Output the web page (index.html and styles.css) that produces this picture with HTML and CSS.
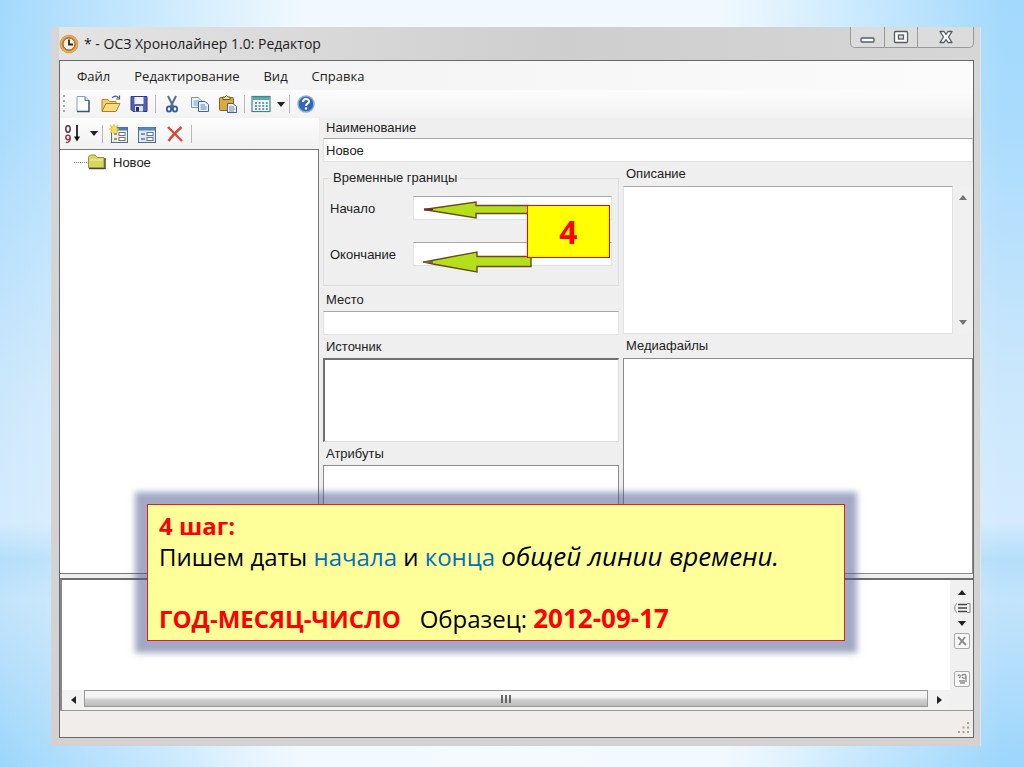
FILE: index.html
```
<!DOCTYPE html>
<html lang="ru">
<head>
<meta charset="utf-8">
<title>ОСЗ Хронолайнер 1.0: Редактор</title>
<link rel="stylesheet" href="styles.css">
</head>
<body>
<main class="slide">
  <section class="window">
    <header class="titlebar">
      <svg class="app-icon" viewBox="0 0 20 20" width="20" height="20"><circle cx="10" cy="10" r="9.3" fill="#c98a3c"/><circle cx="10" cy="10" r="8" fill="none" stroke="#e6b06a" stroke-width="1.5"/><circle cx="10" cy="10" r="6" fill="#fff3df" stroke="#a35f1c"/><path d="M10 5.5V10.5H14" fill="none" stroke="#3a2412" stroke-width="1.8"/></svg>
      <h1 class="title">* - ОСЗ Хронолайнер 1.0: Редактор</h1>
      <div class="caption-buttons">
        <button class="cap cap-small" aria-label="Свернуть"><svg viewBox="0 0 18 16" width="18" height="16"><rect x="2" y="9" width="13" height="4" rx="1" fill="#fff" stroke="#555b66" stroke-width="1.3"/></svg></button>
        <button class="cap cap-small" aria-label="Развернуть"><svg viewBox="0 0 18 16" width="18" height="16"><rect x="2.5" y="2.500" width="13" height="11" rx="1" fill="#fff" stroke="#555b66" stroke-width="1.3"/><rect x="6.500" y="6" width="5" height="4" fill="#ddd" stroke="#555b66" stroke-width="1.3"/></svg></button>
        <button class="cap cap-close" aria-label="Закрыть"><svg viewBox="0 0 18 16" width="18" height="16"><path d="M3 2.500H7L9 5.500L11 2.500H15L11.500 8L15 13.500H11L9 10.500L7 13.500H3L6.500 8Z" fill="#fff" stroke="#555b66" stroke-width="1.300" stroke-linejoin="round"/></svg></button>
      </div>
    </header>
    <div class="client">
      <nav class="menubar">
        <button>Файл</button><button>Редактирование</button><button>Вид</button><button>Справка</button>
      </nav>
      <div class="toolbar">
        <span class="grip"></span>
        <button class="tool" aria-label="Создать"><svg viewBox="0 0 20 20" width="20" height="20"><path d="M4 2.500H12L16 6.500V17.500H4Z" fill="#fafdff" stroke="#8ba0bd"/><path d="M16 6.500V17.500H4" fill="none" stroke="#3c5575" stroke-width="1.400"/><path d="M12 2.500V6.500H16" fill="#cddcee" stroke="#54708f"/></svg></button>
        <button class="tool" aria-label="Открыть"><svg viewBox="0 0 20 20" width="20" height="20"><path d="M1 17V5.500H7L8.500 7.500H15V10" fill="#f4cf6a" stroke="#b8862b"/><path d="M1 17.500L5 9.500H19L15 17.500Z" fill="#fbdc7c" stroke="#b07c20"/><path d="M11 4C13 1.500 16 1.500 17.500 4M18.500 1.500V5H15" fill="none" stroke="#4c5c77" stroke-width="1.200"/></svg></button>
        <button class="tool" aria-label="Сохранить"><svg viewBox="0 0 20 20" width="20" height="20"><path d="M2 2.500H18V17.500H4L2 15.500Z" fill="#5360b6" stroke="#303a86"/><rect x="5.500" y="3" width="9" height="7" fill="#f1f5ff"/><rect x="6" y="12" width="8" height="5.500" fill="#dfe3ee"/><rect x="7" y="13" width="3" height="4.500" fill="#27305c"/></svg></button>
        <span class="sep"></span>
        <button class="tool" aria-label="Вырезать"><svg viewBox="0 0 20 20" width="20" height="20"><path d="M6 2L11.500 13M14 2L8.500 13" stroke="#54708f" stroke-width="2"/><ellipse cx="7" cy="15" rx="2.200" ry="2.700" fill="none" stroke="#315b9d" stroke-width="1.800"/><ellipse cx="13" cy="15" rx="2.200" ry="2.700" fill="none" stroke="#315b9d" stroke-width="1.800"/></svg></button>
        <button class="tool" aria-label="Копировать"><svg viewBox="0 0 20 20" width="20" height="20"><path d="M1.500 3.500H8L11.500 6.500V13.500H1.500Z" fill="#edf4ff" stroke="#7892b7"/><path d="M3.500 7H9M3.500 9H8M3.500 11H8" stroke="#6e98cf"/><path d="M8.500 7.500H15L18.500 10.500V17.500H8.500Z" fill="#edf4ff" stroke="#44679b"/><path d="M10.500 11H15M10.500 13H16.500M10.500 15H16.500" stroke="#4f80c2"/></svg></button>
        <button class="tool" aria-label="Вставить"><svg viewBox="0 0 20 20" width="20" height="20"><rect x="1.500" y="3.500" width="14" height="13" rx="1" fill="#dcaa3c" stroke="#8c6419"/><path d="M5 5.500V3H7L8.500 1.500L10 3H12V5.500Z" fill="#f4e7b8" stroke="#725621"/><path d="M9.500 9.500H15L18.500 12.500V18.500H9.500Z" fill="#f2f7ff" stroke="#405f91"/><path d="M11 13H16M11 15H17M11 17H16" stroke="#6287bb"/></svg></button>
        <span class="sep"></span>
        <button class="tool" aria-label="Таблица"><svg viewBox="0 0 20 20" width="20" height="20"><rect x="1" y="2.500" width="18" height="15" fill="#f5ffff" stroke="#438192" stroke-width="1.200"/><rect x="1.500" y="3" width="17" height="3" fill="#58aaa6"/><path d="M4 9H17M4 12H17M4 15H17" stroke="#387895" stroke-width="1.700" stroke-dasharray="2 1.600"/></svg></button>
        <button class="drop" aria-label="Выбор таблицы"><span class="tri down"></span></button>
        <span class="sep"></span>
        <button class="tool" aria-label="Справка"><svg viewBox="0 0 20 20" width="20" height="20"><circle cx="10" cy="10" r="8" fill="#3467b4" stroke="#8faed7" stroke-width="1.500"/><path d="M7 8C7 4 13 4 13 7.500C13 9.500 10 9.500 10 12" fill="none" stroke="#fff" stroke-width="2"/><circle cx="10" cy="14.500" r="1.200" fill="#fff"/></svg></button>
      </div>
      <div class="workspace">
        <aside class="side">
          <div class="side-toolbar">
            <button class="tool" aria-label="Сортировка"><svg viewBox="0 0 20 20" width="20" height="20"><ellipse cx="4" cy="5" rx="2.200" ry="3.200" fill="none" stroke="#5a3346" stroke-width="1.500"/><circle cx="4" cy="13.500" r="2.200" fill="none" stroke="#8b3c4d" stroke-width="1.500"/><path d="M6.200 13.500C6.200 18.500 3 19 2 18" fill="none" stroke="#8b3c4d" stroke-width="1.500"/><path d="M13 1V15" stroke="#111" stroke-width="1.700"/><path d="M10 12.500H16L13 17.500Z" fill="#111"/></svg></button>
            <button class="drop" aria-label="Порядок сортировки"><span class="tri down"></span></button>
            <span class="sep"></span>
            <button class="tool" aria-label="Добавить"><svg viewBox="0 0 20 20" width="20" height="20"><rect x="2.500" y="3.500" width="16" height="15" fill="#f1f0d9" stroke="#536d90"/><path d="M3 5H18" stroke="#4c78b4" stroke-width="3"/><rect x="10" y="8.500" width="6" height="3" fill="#fff" stroke="#68758b"/><rect x="10" y="13.500" width="6" height="3" fill="#fff" stroke="#68758b"/><path d="M5 10H8M5 15H8" stroke="#777" stroke-width="1.500"/><path d="M1 1L4 3L5 0L6 3L9 1L7.500 4L10 5L7.500 6L9 9L6 7.500L5 10L4 7.500L1 9L2.500 6L0 5L2.500 4Z" fill="#f6df58" stroke="#d9b831" stroke-width=".5"/></svg></button>
            <button class="tool" aria-label="Изменить"><svg viewBox="0 0 20 20" width="20" height="20"><rect x="1.500" y="3.500" width="17" height="15" fill="#dce9f5" stroke="#536d90"/><path d="M2 5H18" stroke="#5c86bb" stroke-width="3"/><rect x="10" y="8.500" width="6" height="3" fill="#fff" stroke="#68758b"/><rect x="10" y="13.500" width="6" height="3" fill="#fff" stroke="#68758b"/><path d="M4 10H8M4 15H8" stroke="#68758b" stroke-width="1.500"/></svg></button>
            <button class="tool" aria-label="Удалить"><svg viewBox="0 0 20 20" width="20" height="20"><path d="M3 3C8 8 12 12 17 17M16.500 3C11 8 7 12 3.500 17" fill="none" stroke="#d34b38" stroke-width="2.400"/></svg></button>
            <span class="sep"></span>
          </div>
          <ul class="tree">
            <li><span class="branch"></span><svg viewBox="0 0 20 18" width="20" height="18"><path d="M1.500 15V4L3.500 2H8L10 4.500H17V15Z" fill="#d6d565" stroke="#9a9839"/><path d="M2 15.500H18V5" fill="none" stroke="#4c4b25" stroke-width="1.500"/><path d="M3 7H16" stroke="#f3f2a4"/></svg><span>Новое</span></li>
          </ul>
        </aside>
        <form class="form">
          <label class="caption" for="name">Наименование</label>
          <input class="field" id="name" type="text" value="Новое">
          <div class="columns">
            <div class="col-left">
              <fieldset class="bounds">
                <legend>Временные границы</legend>
                <label for="start">Начало</label><input class="field" id="start" type="text">
                <label for="end">Окончание</label><input class="field" id="end" type="text">
              </fieldset>
              <label class="caption" for="place">Место</label>
              <input class="field" id="place" type="text">
              <label class="caption" for="source">Источник</label>
              <textarea class="area sunken" id="source"></textarea>
              <label class="caption" for="attrs">Атрибуты</label>
              <textarea class="area grow" id="attrs"></textarea>
            </div>
            <div class="col-right">
              <label class="caption" for="descr">Описание</label>
              <div class="descr">
                <textarea class="area" id="descr"></textarea>
                <div class="vscroll"><span class="tri up"></span><span class="tri down"></span></div>
              </div>
              <label class="caption" for="media">Медиафайлы</label>
              <textarea class="area grow" id="media"></textarea>
            </div>
          </div>
        </form>
      </div>
      <section class="timeline">
        <div class="timeline-main">
          <div class="canvas"></div>
          <div class="hscroll"><button class="arrow" aria-label="Влево"><span class="tri left"></span></button><div class="thumb"><i></i><i></i><i></i></div><button class="arrow" aria-label="Вправо"><span class="tri right"></span></button></div>
        </div>
        <div class="timeline-side">
          <button aria-label="Вверх"><span class="tri up"></span></button>
          <svg viewBox="0 0 18 12" width="18" height="12"><path d="M4 1.500C1 3 1 9 4 10.500M14 1.500H17V10.500H14" fill="none" stroke="#888"/><path d="M5 2.500H14M5 6H14M5 9.500H14" stroke="#444" stroke-width="1.500"/></svg>
          <button aria-label="Вниз"><span class="tri down"></span></button>
          <button class="mini" aria-label="Убрать"><svg viewBox="0 0 14 14" width="14" height="14"><path d="M3 3L11 11M10 3L4 11" stroke="#8d8d8d" stroke-width="2"/></svg></button>
          <button class="mini last" aria-label="Масштаб"><svg viewBox="0 0 14 14" width="14" height="14"><path d="M3 4C4 2 6 3 5 5L4 6M7 4C7 2 11 2 11 4C11 7 8 7 7 5M4 9H10M5 11H10M11 4V10" fill="none" stroke="#8d8d8d" stroke-width="1.300"/></svg></button>
        </div>
      </section>
      <footer class="status"><svg viewBox="0 0 14 14" width="14" height="14"><path d="M10 1h2v2h-2zM5.500 5.500h2v2h-2zM10 5.500h2v2h-2zM1 10h2v2h-2zM5.500 10h2v2h-2zM10 10h2v2h-2z" fill="#aaa39c"/></svg></footer>
    </div>
  </section>
  <svg class="pointers" viewBox="0 0 112 76" width="112" height="76"><path d="M3 9.500L55 2V5.500H107V13.500H55V18L12 11Z" fill="#b5df1b" stroke="#6b4a1c" stroke-width="1.400"/><path d="M3 9.500H12" stroke="#6b2c2c" stroke-width="2"/><path d="M3 62L56 52V56.500H110V66.500H56V72L12 64Z" fill="#b5df1b" stroke="#6b4a1c" stroke-width="1.400"/><path d="M2 62H12" stroke="#75603a" stroke-width="1.800"/></svg>
  <div class="step">4</div>
  <div class="note">
    <p class="key">4 шаг:</p>
    <p>Пишем даты <span class="blue">начала</span> и <span class="blue">конца</span> <em>общей линии времени.</em></p>
    <p class="gap"><b class="key">ГОД-МЕСЯЦ-ЧИСЛО</b>&nbsp;&nbsp; Образец: <b class="key date">2012-09-17</b></p>
  </div>
</main>
</body>
</html>
```

FILE: styles.css
```
* { box-sizing: border-box; }
body { margin: 0; font-family: "Liberation Sans", Arial, sans-serif; font-size: 13px; color: #222; }
button { padding: 0; border: 0; background: none; font: inherit; color: inherit; display: flex; align-items: center; justify-content: center; }
svg { display: block; flex: none; }

.slide {
  position: relative;
  min-height: 100vh;
  padding: 27px 43px 21px 51px;
  display: flex;
  background:
    radial-gradient(ellipse at 50% 100%, #f4fafe 0, rgba(244, 250, 254, 0) 45%),
    linear-gradient(90deg, rgba(255, 255, 255, 0) 0, rgba(255, 255, 255, .85) 30%, rgba(255, 255, 255, .85) 70%, rgba(255, 255, 255, 0) 98%),
    linear-gradient(180deg, #a3d9fd 0, #a9dbfd 15%, #cbe7fc 50%, #d3ebfd 68%, #b4defb 73%, #c2e4fb 78%, #b9e0fb 84%, #9cd6fc 100%);
}

.window {
  flex: 1;
  display: flex;
  flex-direction: column;
  padding: 0 6px 8px 8px;
  background: linear-gradient(#d6d6d6, #d3d1d1);
  border-right: 1px solid #e6e2e2;
}
.titlebar { height: 33px; display: flex; align-items: center; gap: 5px; background: linear-gradient(90deg, #e4e4e4, #cecece 55%, #d6d6d6); }
.title { flex: 1; margin: 0; font: 14px "Open Sans", "Noto Sans", sans-serif; color: #1d1d1d; }
.caption-buttons { align-self: flex-start; display: flex; border: 1px solid #999; border-top: 0; border-radius: 0 0 5px 5px; background: #dcdcdc; }
.cap { height: 20px; }
.cap + .cap { border-left: 1px solid #999; }
.cap-small { width: 33px; }
.cap-close { width: 56px; }

.client { flex: 1; display: flex; flex-direction: column; border: 1px solid #686868; background: #efefef; }
.menubar { height: 29px; padding-left: 17px; display: flex; align-items: center; gap: 24px; background: linear-gradient(90deg, #f1f1f1, #fbfbfb); font: 13px "Open Sans", "Noto Sans", sans-serif; }
.toolbar { height: 28px; padding-left: 3px; display: flex; align-items: center; background: linear-gradient(#fcfcfc, #f2f2f2); }
.grip { width: 2px; height: 18px; margin-right: 4px; background: repeating-linear-gradient(#aaa 0 2px, transparent 2px 5px); }
.tool { width: 28px; height: 24px; }
.sep { width: 1px; height: 18px; margin: 0 2px; background: #b9b9b9; }
.drop { width: 12px; height: 20px; }

.workspace { flex: 1; display: grid; grid-template-columns: 259px 1fr; gap: 4px; }
.side { display: flex; flex-direction: column; }
.side-toolbar { height: 31px; display: flex; align-items: center; background: linear-gradient(#fdfdfd, #f1f1f1); }
.tree { flex: 1; margin: 0; padding: 3px 0 0 14px; list-style: none; background: #fff; border: 1px solid #777; border-left: 0; }
.tree li { display: flex; align-items: center; gap: 6px; }
.branch { width: 13px; border-top: 1px dotted #888; margin-right: -6px; }

.form { display: flex; flex-direction: column; }
.caption { height: 24px; padding: 4px 3px 0; line-height: 16px; }
.form > .caption { height: 20px; padding-top: 2px; }
.field, .area { display: block; width: 100%; margin: 0; padding: 0 2px; border: 1px solid #e2e2e2; border-top-color: #a6a6a6; border-radius: 0; outline: 0; background: #fff; font: 13px "Liberation Sans", Arial, sans-serif; color: #222; resize: none; }
.field { height: 24px; flex: none; }
.columns { flex: 1; display: grid; grid-template-columns: 296fr 350fr; gap: 4px; }
.col-left, .col-right { display: flex; flex-direction: column; }
.bounds { margin: 8px 0 2px; height: 116px; border: 1px solid #dcdfe2; padding: 10px 6px 0; display: grid; grid-template-columns: 83px 1fr; grid-template-rows: 24px 24px; row-gap: 22px; align-items: center; align-content: start; }
.bounds legend { padding: 0 3px; line-height: 16px; }
.col-left > .caption { height: 23px; }
.sunken { height: 84px; border: 2px solid #707070; border-right: 1px solid #ddd; border-bottom: 1px solid #ddd; }
.grow { flex: 1; border-color: #8a8a8a; }
.descr { height: 148px; display: flex; }
.vscroll { width: 21px; padding: 9px 0; background: #f1f1f1; display: flex; flex-direction: column; align-items: center; justify-content: space-between; opacity: .6; }

.tri { width: 0; height: 0; border: 4px solid transparent; }
.tri.up { border-top: 0; border-bottom: 5px solid #222; }
.tri.down { border-bottom: 0; border-top: 5px solid #222; }
.tri.left { border-left: 0; border-right: 5px solid #222; }
.tri.right { border-right: 0; border-left: 5px solid #222; }

.timeline { height: 132px; margin-top: 4px; display: flex; border-top: 2px solid #6c6c6c; border-left: 2px solid #888; }
.timeline-main { flex: 1; display: flex; flex-direction: column; background: #fff; }
.canvas { flex: 1; }
.hscroll { height: 20px; display: flex; background: #f2f2f2; }
.arrow { width: 22px; }
.thumb { flex: 1; height: 17px; display: flex; align-items: center; justify-content: center; gap: 2px; border: 1px solid #999; background: linear-gradient(#f4f4f4 40%, #cfcfcf 60%, #bbb); }
.thumb i { width: 2px; height: 8px; background: #666; }
.timeline-side { width: 23px; padding: 8px 2px 0; display: flex; flex-direction: column; align-items: center; gap: 5px; background: #f0f0f0; }
.timeline-side > button { width: 16px; height: 9px; }
.timeline-side > .mini { height: 16px; border: 1px solid #aaa; border-radius: 2px; background: #f8f8f8; }
.timeline-side > .last { margin-top: 17px; }
.status { height: 27px; padding: 2px; display: flex; align-items: flex-end; justify-content: flex-end; border-top: 1px solid #999; background: #f0edea; }

.pointers { position: absolute; left: 421px; top: 200px; }
.step { position: absolute; left: 527px; top: 205px; width: 83px; height: 53px; display: flex; align-items: center; justify-content: center; border: 1px solid #f00; background: #ff0; color: #f00; font: bold 32px "Open Sans", "Noto Sans", sans-serif; }
.note { position: absolute; left: 147px; right: 179px; top: 504px; padding: 5px 11px 6px; border: 1px solid #e02020; background: #ff9; box-shadow: 0 0 6px 12px rgba(72, 84, 138, .5); color: #000; font: 24px/31px "Open Sans", "Noto Sans", sans-serif; }
.note p { margin: 0; }
.note .gap { margin-top: 31px; }
.note em, .note .date { font-size: 26px; line-height: 24px; }
.key { color: #f00; font-weight: bold; }
.blue { color: #0070c0; }
```
